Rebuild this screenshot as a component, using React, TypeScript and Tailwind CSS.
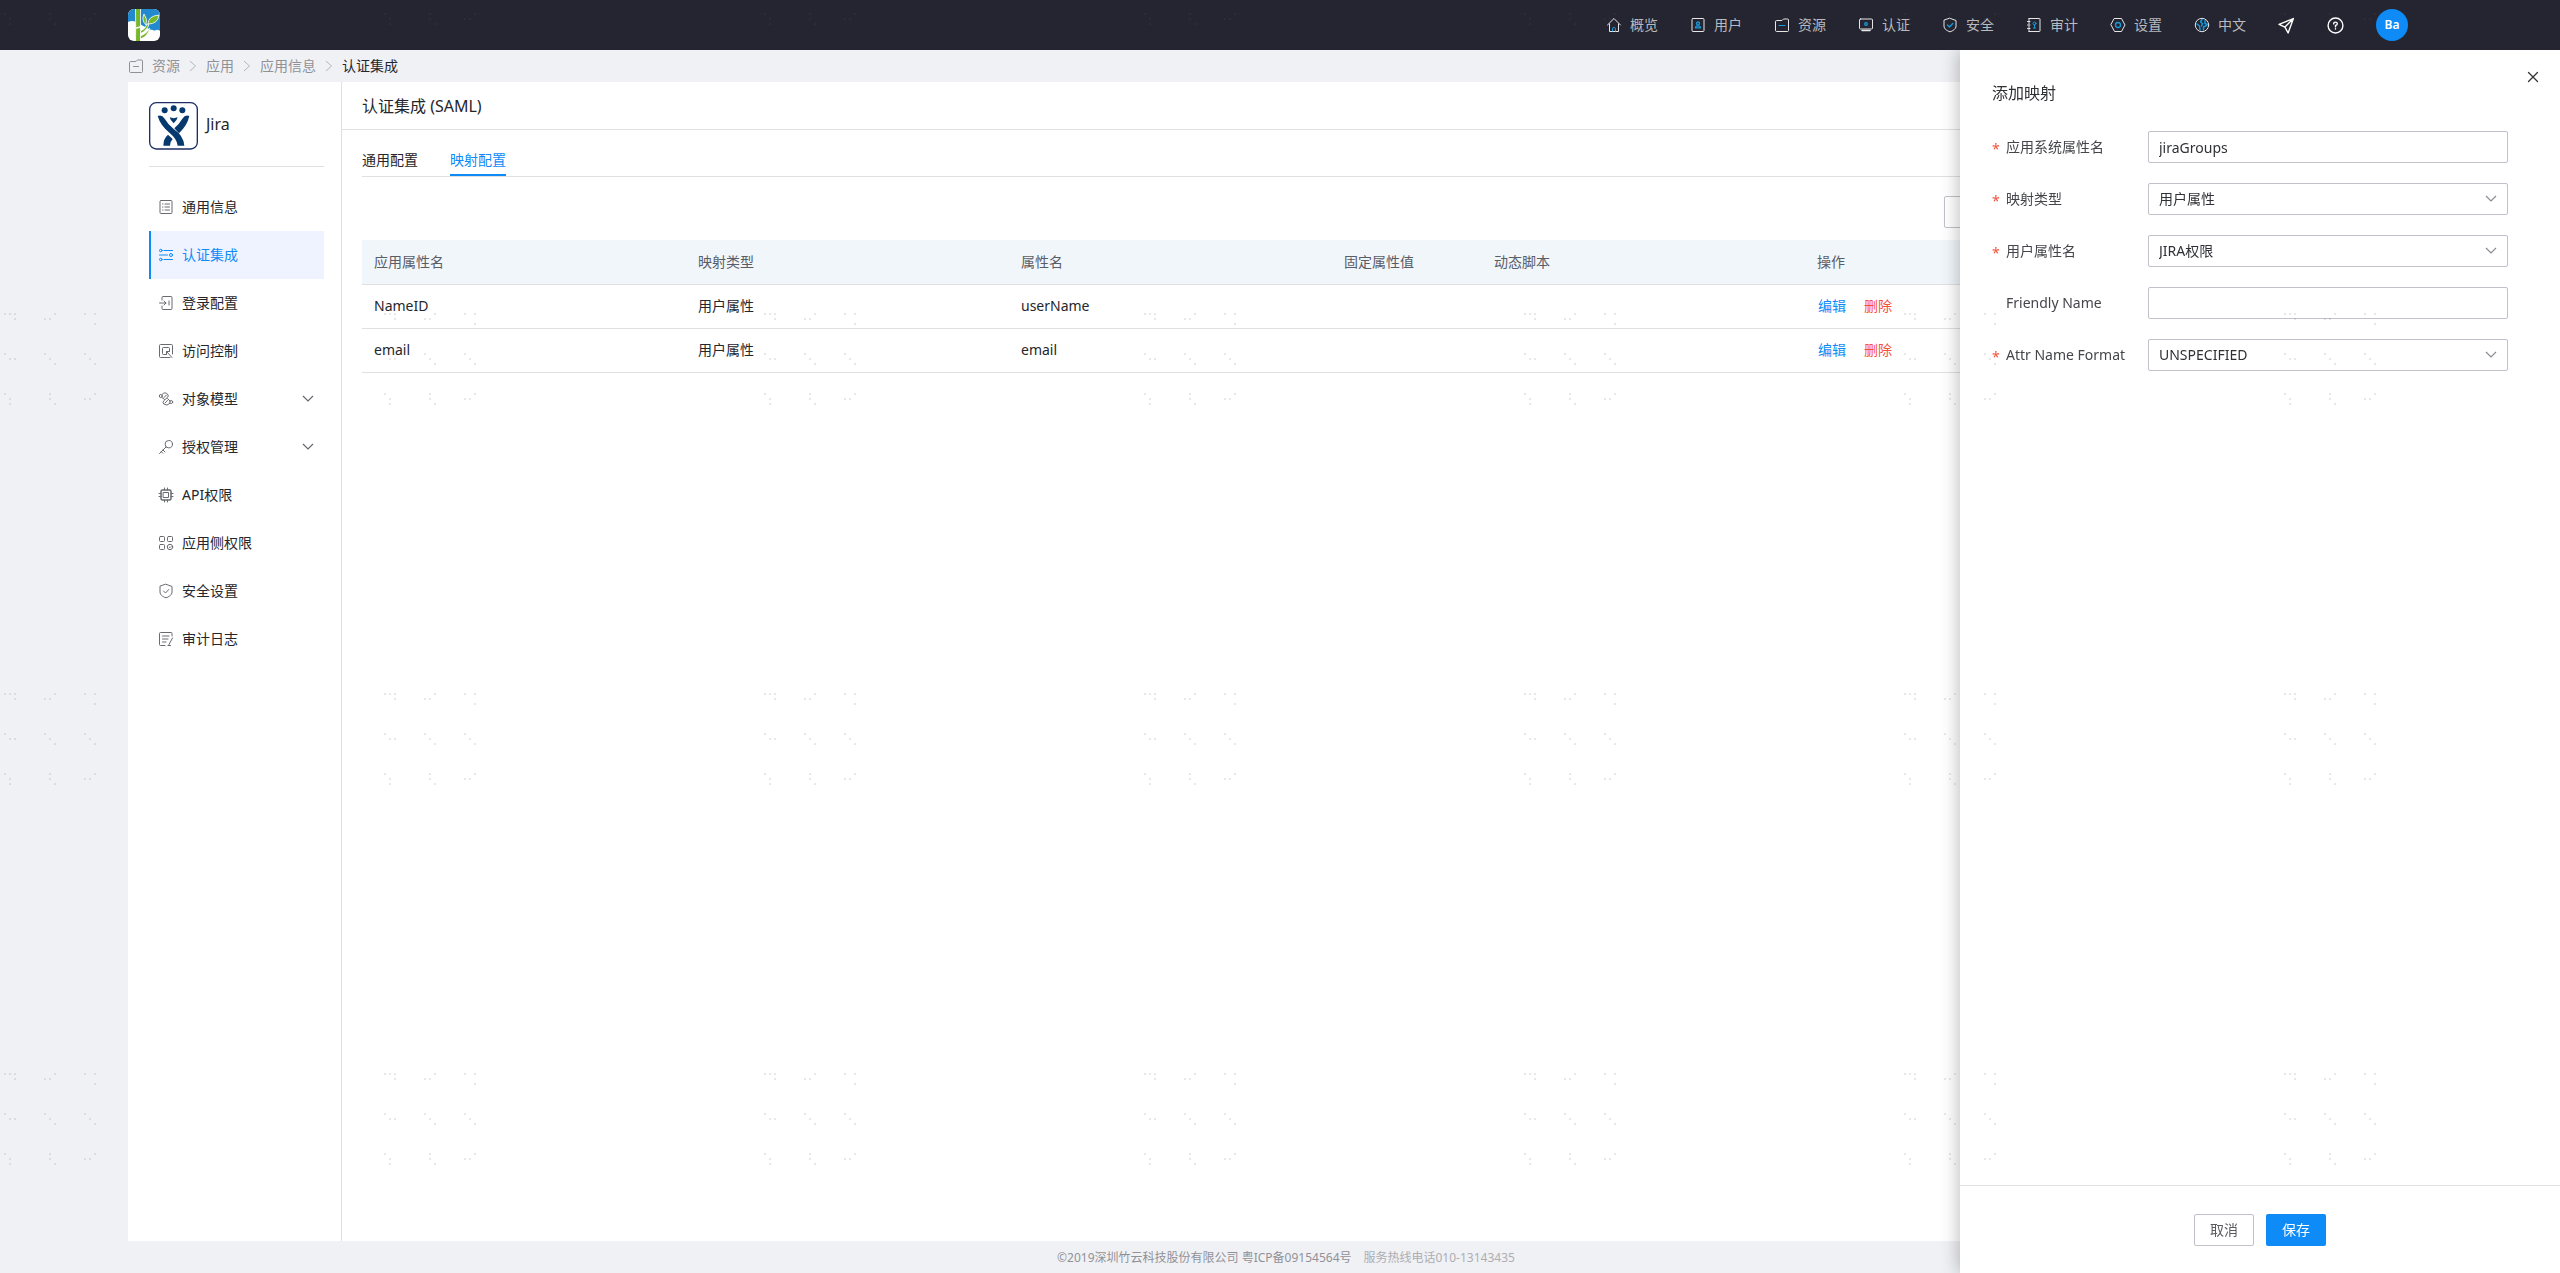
import { useState } from "react"
import type { ReactNode } from "react"

type IconProps = { children: ReactNode; className?: string }

function Icon({ children, className = "size-4" }: IconProps) {
    return (
        <svg viewBox="0 0 16 16" fill="none" stroke="currentColor" strokeWidth="1" strokeLinejoin="round" strokeLinecap="round" className={`shrink-0 ${className}`} aria-hidden="true">
            {children}
        </svg>
    )
}

const folder = <path d="M1.500 4.500q0-1 1-1H8l1.500-1.500h4q1 0 1 1v10.500q0 1-1 1h-11q-1 0-1-1z" />
const shield = <path d="M8 1.300 14 3.500V9c0 3-3 4.800-6 5.800C5 13.800 2 12 2 9V3.500z" />

const topNav = [
    { label: "概览", icon: <><path d="M1.500 8 8 1.500 14.500 8M3.500 7v7.500h9V7" /><path stroke="#169bdc" d="M6.500 14v-2.500q0-1 1.500-1t1.500 1V14" /></> },
    { label: "用户", icon: <><rect x="2" y="1.500" width="12" height="13" rx="1" /><g stroke="#169bdc" strokeWidth="1.300"><circle cx="8" cy="6.500" r="1.500" /><path d="M5.500 10.800q0-2 2.500-2t2.500 2z" /></g></> },
    { label: "资源", icon: <>{folder}<path stroke="#169bdc" d="M5 8.500h6" /></> },
    { label: "认证", icon: <><rect x="1.500" y="2" width="13" height="10" rx="1" /><path d="M4 13.500h8" strokeWidth="1.500" /><circle cx="8" cy="7" r="1.300" stroke="#169bdc" strokeWidth="1.300" /></> },
    { label: "安全", icon: <>{shield}<path stroke="#169bdc" strokeWidth="1.300" d="m5.500 8 2 2 3.300-3.500" /></> },
    { label: "审计", icon: <><path d="M3 1.500h10.500q.5 0 .5.500v12q0 .5-.5.500H3M3 1.500v2m0 2v1.500m0 2v1.500m0 2v2M1.500 4.500H4M1.500 8H4M1.500 11.500H4" /><g stroke="#169bdc"><circle cx="8.500" cy="6.500" r="1.500" /><path d="M8.500 8v3M7.500 11h2" /></g></> },
    { label: "设置", icon: <><path d="M4.500 1.500h7L15 8l-3.500 6.500h-7L1 8z" /><circle cx="8" cy="8" r="2.500" stroke="#169bdc" strokeWidth="1.300" /></> },
    { label: "中文", icon: <><circle cx="8" cy="8" r="6.700" /><path stroke="#169bdc" strokeWidth="1.500" d="M8 2.500 6.500 5l2 1.500-1 2.500M3 7l2.500 2 .5 4M9.500 13V10l3-1.500M11 3.500v3l2.500 1" /></> },
]

const sideNav = [
    { label: "通用信息", icon: <><rect x="2" y="1.500" width="12" height="13" rx="1" /><path d="M4.500 5h.5M7 5h4.500M4.500 8h.5M7 8h4.500M4.500 11h.5M7 11h4.500" /></> },
    { label: "认证集成", icon: <><circle cx="2.800" cy="3.500" r="1.300" /><circle cx="13" cy="8" r="1.500" /><circle cx="2.800" cy="12.500" r="1.300" /><path d="M6 3.500h8.500M1.500 8h8M6 12.500h8.500" /></> },
    { label: "登录配置", icon: <><path d="M4 5V2.500q0-1 1-1h8q1 0 1 1v11q0 1-1 1H5q-1 0-1-1V11M1.500 8H8M6 6l2 2-2 2M11 6v4" /></> },
    { label: "访问控制", icon: <><path d="M12 14.500H2.500q-1 0-1-1v-11q0-1 1-1h11q1 0 1 1V11" /><path d="M8 11.500H5.500q-1 0-1-1v-5q0-1 1-1h5q1 0 1 1V8M8.500 8.500l5.500 6M8.500 11.500v-3h3" /></> },
    { label: "对象模型", expandable: true, icon: <><circle cx="2.800" cy="5" r="1.500" /><circle cx="13.200" cy="11" r="1.500" /><path d="M4 3.500q3-3.500 6 .2.800 1.300-.5 2.600l-4 3.700q-1 1.500.3 3 3.200 2.500 6-.5M4 6.500l2.500 2M9.500 7.500l2.500 2.500M8.500 4 6 6.500M9.500 9.500 7 12" /></> },
    { label: "授权管理", expandable: true, icon: <><circle cx="10.800" cy="5.200" r="3.700" /><path d="m8 8-6.500 6.500M5 11l2 2M3.300 12.700l1.500 1.500" /></> },
    { label: "API权限", icon: <><rect x="3" y="3" width="10" height="10" rx="1.500" strokeWidth="1.500" /><rect x="5.500" y="5.500" width="5" height="5" /><path d="M6.500 1v2M9.500 1v2M6.500 13v2M9.500 13v2M1 6.500h2M1 9.500h2M13 6.500h2M13 9.500h2" /></> },
    { label: "应用侧权限", icon: <><rect x="1.500" y="1.500" width="5" height="5" rx="1" /><rect x="9.500" y="1.500" width="5" height="5" rx="1" /><rect x="1.500" y="9.500" width="5" height="5" rx="1" /><circle cx="12" cy="12" r="2.700" /><path d="m11.300 12 .7.700 1-1" /></> },
    { label: "安全设置", icon: <>{shield}<path d="m5.500 8 2 2 3.300-3.500" /></> },
    { label: "审计日志", icon: <><path d="M14 5V2.500q0-1-1-1H2.500q-1 0-1 1v11q0 1 1 1H7M4.500 5H11M4.500 8H10M4.500 11H8M14.500 7 11 13.500M10 14.500h2.500" /></> },
]

const rows = [
    { attr: "NameID", type: "用户属性", name: "userName" },
    { attr: "email", type: "用户属性", name: "email" },
]

// each group is a 3x3 grid of dots, written as [column, row]
const dotGroups = [
    [[0, 0], [1, 0], [2, 0], [2, 1]],
    [[2, 0], [0, 1], [1, 1]],
    [[0, 0], [2, 0], [2, 2]],
    [[0, 0], [1, 1], [2, 1]],
    [[0, 0], [1, 1], [2, 2]],
    [[0, 0], [1, 1], [2, 2]],
    [[0, 0], [1, 1], [1, 2]],
    [[1, 0], [1, 1], [2, 2]],
    [[2, 0], [0, 1], [1, 1]],
]

function Watermark() {
    return (
        <svg className="pointer-events-none fixed inset-0 z-30 size-full" aria-hidden="true">
            <defs>
                <pattern id="dots" x="4" y="-67" width="380" height="380" patternUnits="userSpaceOnUse">
                    {dotGroups.map((group, i) =>
                        group.map(([col, row]) => (
                            <rect key={`${i}-${col}-${row}`} x={(i % 3) * 40 + col * 5} y={Math.floor(i / 3) * 40 + row * 5} width="2" height="2" fill="#5a5a5a" fillOpacity="0.14" />
                        ))
                    )}
                </pattern>
            </defs>
            <rect width="100%" height="100%" fill="url(#dots)" />
        </svg>
    )
}

function Logo() {
    return (
        <svg viewBox="0 0 32 32" className="size-8" role="img" aria-label="竹云">
            <clipPath id="logo"><rect width="32" height="32" rx="6" /></clipPath>
            <g clipPath="url(#logo)">
                <rect width="32" height="32" fill="#fff" />
                <path fill="#2389cf" d="M0 0h32v22q-2-2-4-1-2 1-3 0-4 0-6-2L8 13q-4-2-8 0z" />
                <g fill="#76b82a" stroke="#fff" strokeWidth=".8">
                    <path d="M7.500-1h5v18.500L7.700 19z" />
                    <path d="M7.700 19.500l4.800-1.200V33H7.500z" />
                    <path d="M12.500 27q6-2 9-8-1 8-9 11z" />
                    <path d="M12.500 22q5-2 6.500-7l2 .5q-2 6-8.500 9z" />
                    <path d="M20 15q0-8 11-9-1 9-11 9z" />
                    <path d="M18 16q-5-5-2-11 4 5 2 11z" />
                </g>
            </g>
        </svg>
    )
}

function JiraLogo() {
    return (
        <svg viewBox="0 0 147 144" className="h-12 w-[49px]" role="img" aria-label="Jira">
            <rect x="2" y="2" width="143" height="139" rx="20" fill="#fff" stroke="#1d2f66" strokeWidth="4" />
            <g fill="#063a6e">
                <circle cx="47" cy="25" r="9" />
                <circle cx="74" cy="19" r="9" />
                <circle cx="100" cy="25" r="9" />
                <path d="M62 46q12 5 24 0-2 10-12 18-10-8-12-18z" />
                <path d="M26 42q12-6 21 8 10 17 27 31 30 20 32 50H86q-2-20-24-38Q34 70 26 42z" />
                <path d="M121 42q-12-6-21 8-8 14-24 29l14 15q25-24 31-52z" />
                <path d="M57 98q-14 12-14 33h20q0-12 8-20z" />
            </g>
        </svg>
    )
}

function Chevron({ className }: { className: string }) {
    return (
        <svg viewBox="0 0 12 12" fill="none" stroke="currentColor" className={`size-3 shrink-0 ${className}`} aria-hidden="true">
            <path d="m1 3 5 5 5-5" strokeWidth="1.200" />
        </svg>
    )
}

function Separator() {
    return (
        <svg viewBox="0 0 8 12" fill="none" stroke="#b5b6bc" className="h-3 w-2" aria-hidden="true">
            <path d="m1 1 5.500 5L1 11" />
        </svg>
    )
}

function Header() {
    return (
        <header className="flex h-[50px] items-center justify-between bg-[#242530] px-[5%] text-[#b9babf]">
            <Logo />
            <nav className="flex items-center gap-8 pr-6">
                {topNav.map((item) => (
                    <a key={item.label} href="#" className="flex items-center gap-2">
                        <Icon className="size-4 text-[#e6e6e8]">{item.icon}</Icon>
                        {item.label}
                    </a>
                ))}
                <button aria-label="消息" className="text-white">
                    <Icon className="size-[17px]"><path d="M14.500 1.500 1 7l5.500 2.500L9.500 15zM6.500 9.500l8-8" strokeWidth="1.300" /></Icon>
                </button>
                <button aria-label="帮助" className="text-white">
                    <Icon className="size-[17px]"><circle cx="8" cy="8" r="7" strokeWidth="1.300" /><path d="M6.300 6.500q0-1.700 1.700-1.700t1.700 1.500Q9.700 7.500 8 8v1.300M8 11v.3" strokeWidth="1.300" /></Icon>
                </button>
                <button className="size-8 rounded-full bg-[#0e8bf7] text-xs font-semibold text-white">Ba</button>
            </nav>
        </header>
    )
}

function Sidebar() {
    return (
        <aside className="w-[214px] shrink-0 border-r border-[#e0e0e3] pr-[17px] pl-[21px]">
            <div className="flex h-[85px] items-center gap-2 border-b border-[#e0e0e3] pt-1 text-base">
                <JiraLogo />
                <span className="pb-1">Jira</span>
            </div>
            <ul className="pt-4">
                {sideNav.map((item) => {
                    const active = item.label === "认证集成"
                    return (
                        <li key={item.label}>
                            <a href="#" className={`flex h-12 items-center gap-2 border-l-2 pr-[10px] pl-[7px] ${active ? "border-[#0e8bf7] bg-[#eff3ff] text-[#0e8bf7]" : "border-transparent"}`}>
                                <Icon className={active ? "size-4" : "size-4 text-[#6a6b70]"}>{item.icon}</Icon>
                                <span className="grow">{item.label}</span>
                                {item.expandable && <Chevron className="text-[#66676c]" />}
                            </a>
                        </li>
                    )
                })}
            </ul>
        </aside>
    )
}

function MappingTable() {
    return (
        <table className="w-full table-fixed text-left">
            <colgroup>
                <col className="w-[324px]" />
                <col className="w-[323px]" />
                <col className="w-[323px]" />
                <col className="w-[150px]" />
                <col className="w-[323px]" />
                <col />
            </colgroup>
            <thead>
                <tr className="h-11 border-b border-[#e0e0e3] bg-[#f1f6fa] text-[#5a5c66]">
                    {["应用属性名", "映射类型", "属性名", "固定属性值", "动态脚本", "操作"].map((title) => (
                        <th key={title} className="px-3 font-normal">{title}</th>
                    ))}
                </tr>
            </thead>
            <tbody>
                {rows.map((row) => (
                    <tr key={row.attr} className="h-11 border-b border-[#e0e0e3]">
                        <td className="px-3">{row.attr}</td>
                        <td className="px-3">{row.type}</td>
                        <td className="px-3">{row.name}</td>
                        <td />
                        <td />
                        <td className="px-[13px]">
                            <button className="mr-[18px] text-[#0e8bf7]">编辑</button>
                            <button className="text-[#f5503c]">删除</button>
                        </td>
                    </tr>
                ))}
            </tbody>
        </table>
    )
}

type FieldProps = { id: string; label: string; required?: boolean; children: ReactNode }

function Field({ id, label, required, children }: FieldProps) {
    return (
        <div className="flex items-center">
            <span className="w-[14px] pt-1 text-[#f5503c]">{required && "*"}</span>
            <label htmlFor={id} className="w-[142px] text-[#45464b]">{label}</label>
            <div className="relative grow">{children}</div>
        </div>
    )
}

const control = "block h-8 w-full rounded-xs border border-[#c1c2cb] bg-white px-[10px] text-[#303136] outline-none"

function SelectField({ id, label, value }: { id: string; label: string; value: string }) {
    return (
        <Field id={id} label={label} required>
            <select id={id} className={`${control} appearance-none`}>
                <option>{value}</option>
            </select>
            <Chevron className="pointer-events-none absolute top-[10px] right-[11px] text-[#8a8b90]" />
        </Field>
    )
}

function Drawer() {
    const [attrName, setAttrName] = useState("jiraGroups")
    const [friendlyName, setFriendlyName] = useState("")
    return (
        <form className="fixed top-[50px] right-0 bottom-0 z-20 flex w-[600px] flex-col bg-white shadow-[-2px_0_16px_rgba(0,0,0,.25)] [clip-path:inset(0_0_0_-40px)]">
            <button type="button" aria-label="关闭" className="absolute top-[19px] right-[19px] text-[#333]">
                <Icon><path d="m3.500 3.500 9 9m0-9-9 9" strokeWidth="1.300" /></Icon>
            </button>
            <h2 className="px-8 pt-[31px] text-base text-[#303136]">添加映射</h2>
            <div className="flex grow flex-col gap-5 pt-[26px] pr-[52px] pl-8">
                <Field id="attr" label="应用系统属性名" required>
                    <input id="attr" className={control} value={attrName} onChange={(e) => setAttrName(e.target.value)} />
                </Field>
                <SelectField id="type" label="映射类型" value="用户属性" />
                <SelectField id="userAttr" label="用户属性名" value="JIRA权限" />
                <Field id="friendly" label="Friendly Name">
                    <input id="friendly" className={control} value={friendlyName} onChange={(e) => setFriendlyName(e.target.value)} />
                </Field>
                <SelectField id="format" label="Attr Name Format" value="UNSPECIFIED" />
            </div>
            <div className="flex h-[88px] items-center justify-center gap-3 border-t border-[#e0e0e3]">
                <button type="button" className="h-8 w-[60px] rounded-xs border border-[#c1c2cb] text-[#5a5b60]">取消</button>
                <button type="button" className="h-8 w-[60px] rounded-xs bg-[#0e8bf7] text-white">保存</button>
            </div>
        </form>
    )
}

export default function App() {
    return (
        <div className="flex min-h-screen flex-col bg-[#f0f1f5] font-['Noto_Sans','Noto_Sans_CJK_SC',sans-serif] text-sm text-[#25262b]">
            <Header />
            <nav className="flex h-8 items-center gap-[9px] px-[5%] text-[#909197]">
                <a href="#" className="flex items-center gap-2">
                    <Icon>{folder}<path d="M5.500 8.500h5" /></Icon>
                    资源
                </a>
                <Separator />
                <a href="#">应用</a>
                <Separator />
                <a href="#">应用信息</a>
                <Separator />
                <span className="text-[#25262b]">认证集成</span>
            </nav>
            <main className="mx-[5%] flex grow bg-white">
                <Sidebar />
                <section className="min-w-0 grow">
                    <h1 className="flex h-12 items-center border-b border-[#e0e0e3] px-5 text-base">认证集成 (SAML)</h1>
                    <div className="px-5 pt-[14px]">
                        <div className="flex h-[33px] gap-8 border-b border-[#e0e0e3]">
                            <button>通用配置</button>
                            <button className="border-b-2 border-[#0e8bf7] pt-[2px] text-[#0e8bf7]">映射配置</button>
                        </div>
                        <div className="flex justify-end pt-[19px] pb-3">
                            <input aria-label="搜索" className="h-8 w-[468px] rounded-xs border border-[#c1c2cb] px-3" />
                        </div>
                        <MappingTable />
                    </div>
                </section>
            </main>
            <footer className="flex h-8 items-center justify-center gap-3 pt-[2px] pl-3 text-xs text-[#909197]">
                <span>©2019深圳竹云科技股份有限公司 粤ICP备09154564号</span>
                <span className="text-[#adaeb3]">服务热线电话010-13143435</span>
            </footer>
            <Drawer />
            <Watermark />
        </div>
    )
}
